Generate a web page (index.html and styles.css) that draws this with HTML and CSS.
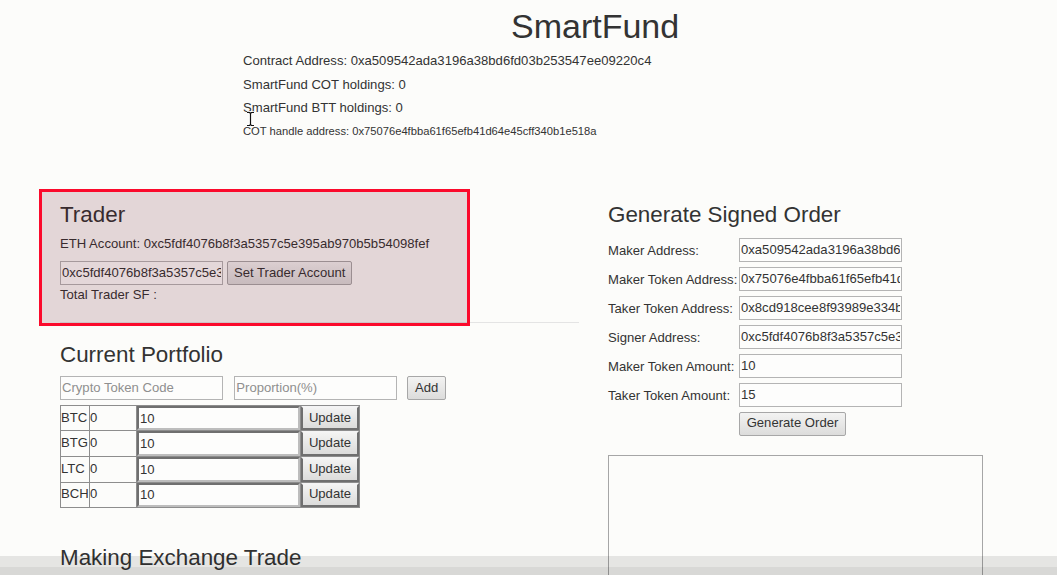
FILE: index.html
```html
<!DOCTYPE html>
<html lang="en">
<head>
<meta charset="utf-8">
<title>SmartFund</title>
<link rel="stylesheet" href="styles.css">
</head>
<body>
<header class="top">
  <h1 class="title">SmartFund</h1>
  <div class="info">
    <p class="info-line">Contract Address: 0xa509542ada3196a38bd6fd03b253547ee09220c4</p>
    <p class="info-line">SmartFund COT holdings: 0</p>
    <p class="info-line">SmartFund BTT holdings: 0</p>
    <p class="info-line info-small">COT handle address: 0x75076e4fbba61f65efb41d64e45cff340b1e518a</p>
  </div>
</header>

<main class="cols">
  <section class="col-left">
    <div class="trader">
      <h3 class="heading heading-trader">Trader</h3>
      <p class="eth">ETH Account: 0xc5fdf4076b8f3a5357c5e395ab970b5b54098fef</p>
      <div class="set-row">
        <input class="field" type="text" value="0xc5fdf4076b8f3a5357c5e395ab970b5b54098fef">
        <button class="btn">Set Trader Account</button>
      </div>
      <p class="total">Total Trader SF :</p>
    </div>
    <hr class="rule">
    <h3 class="heading heading-portfolio">Current Portfolio</h3>
    <div class="add-row">
      <input class="field" type="text" placeholder="Crypto Token Code">
      <input class="field field-prop" type="text" placeholder="Proportion(%)">
      <button class="btn btn-add">Add</button>
    </div>
    <table class="tokens">
      <tr><td class="c-code">BTC</td><td class="c-val">0</td><td class="c-in"><input class="cell-input" type="text" value="10"></td><td class="c-btn"><button class="btn cell-btn">Update</button></td></tr>
      <tr><td class="c-code">BTG</td><td class="c-val">0</td><td class="c-in"><input class="cell-input" type="text" value="10"></td><td class="c-btn"><button class="btn cell-btn">Update</button></td></tr>
      <tr><td class="c-code">LTC</td><td class="c-val">0</td><td class="c-in"><input class="cell-input" type="text" value="10"></td><td class="c-btn"><button class="btn cell-btn">Update</button></td></tr>
      <tr><td class="c-code">BCH</td><td class="c-val">0</td><td class="c-in"><input class="cell-input" type="text" value="10"></td><td class="c-btn"><button class="btn cell-btn">Update</button></td></tr>
    </table>
    <h3 class="heading heading-making">Making Exchange Trade</h3>
  </section>

  <section class="col-right">
    <h3 class="heading heading-order">Generate Signed Order</h3>
    <div class="order-grid">
      <label class="order-label">Maker Address:</label>
      <input class="field" type="text" value="0xa509542ada3196a38bd6fd03b253547ee09220c4">
      <label class="order-label">Maker Token Address:</label>
      <input class="field" type="text" value="0x75076e4fbba61f65efb41d64e45cff340b1e518a">
      <label class="order-label">Taker Token Address:</label>
      <input class="field" type="text" value="0x8cd918cee8f93989e334b1d64e45cff340b1e518">
      <label class="order-label">Signer Address:</label>
      <input class="field" type="text" value="0xc5fdf4076b8f3a5357c5e395ab970b5b54098fef">
      <label class="order-label">Maker Token Amount:</label>
      <input class="field" type="text" value="10">
      <label class="order-label">Taker Token Amount:</label>
      <input class="field" type="text" value="15">
    </div>
    <button class="btn btn-generate">Generate Order</button>
    <textarea class="output"></textarea>
  </section>
</main>

<div class="annotation"></div>
<svg class="ibeam" width="9" height="16" viewBox="0 0 9 16" aria-hidden="true">
  <path d="M1 1.5h2.5l1 1 1-1H8M1 14.5h2.5l1-1 1 1H8M4.5 2.5v11" fill="none" stroke="#fff" stroke-width="2.6"/>
  <path d="M1 1.5h2.5l1 1 1-1H8M1 14.5h2.5l1-1 1 1H8M4.5 2.5v11" fill="none" stroke="#111" stroke-width="1.2"/>
</svg>
<div class="hscroll"><div class="hscroll-track"></div><div class="hscroll-thumb"></div></div>
</body>
</html>
```

FILE: styles.css
```css
html {
  background: #fcfcfa;
}
body {
  margin: 0;
  font-family: "Liberation Sans", Arial, sans-serif;
  font-size: 13.1px;
  line-height: 18.7px;
  color: #333;
  width: 1057px;
  height: 575px;
  overflow: hidden;
}

.title {
  margin: 8px 0 4px 511px;
  font-size: 34px;
  line-height: 37.4px;
  font-weight: normal;
  color: #333;
}
.info {
  padding-left: 243px;
}
.info-line {
  margin: 0;
  line-height: 23.5px;
  white-space: nowrap;
}
.info-small {
  font-size: 11.2px;
  line-height: 22.5px;
}

.cols {
  display: flex;
  gap: 29px;
  padding: 61px 0 0 60px;
}
.col-left {
  width: 519px;
  flex: none;
}
.col-right {
  width: 449px;
  flex: none;
}

.heading {
  font-size: 22.4px;
  line-height: 24.6px;
  font-weight: normal;
  margin: 0;
  color: #333;
  white-space: nowrap;
}
.heading-trader { margin-bottom: 7px; }
.heading-portfolio { margin-top: 19.8px; margin-bottom: 8.7px; }
.heading-making { margin-top: 37.7px; }
.heading-order { margin-bottom: 9.5px; }

.eth {
  margin: 0 0 7.5px;
  white-space: nowrap;
}
.total {
  margin: 0;
  padding-top: 1px;
}

.field {
  box-sizing: border-box;
  width: 163px;
  height: 23.5px;
  margin: 0;
  padding: 0 1px;
  border: 1px solid #b4b4b4;
  border-radius: 0;
  background: #fdfdfc;
  font: inherit;
  font-size: 13.1px;
  color: #333;
  outline: none;
}
.field::placeholder {
  color: #8f8f8f;
}

.btn {
  box-sizing: border-box;
  height: 23.5px;
  margin: 0;
  padding: 0 6px;
  border: 1px solid #a7a7a7;
  border-radius: 2px;
  background: linear-gradient(#f3f3f2, #dcdcdb);
  font: inherit;
  font-size: 13.1px;
  color: #333;
  white-space: nowrap;
}

.set-row {
  display: flex;
  gap: 4px;
  height: 23.5px;
}

.rule {
  margin: 17.7px 0 0;
  border: 0;
  border-top: 1px solid #e4e4e4;
  height: 0;
}

.add-row {
  display: flex;
  height: 23.6px;
  margin-bottom: 5px;
}
.field-prop {
  margin-left: 11.3px;
}
.btn-add {
  margin-left: 10px;
  width: 38.7px;
  padding: 0;
}

.tokens {
  border-collapse: collapse;
  border: 1px solid #3d3d3d;
}
.tokens td {
  border: 1px solid #8d8d8d;
  padding: 0;
  height: 24.6px;
  line-height: 18.7px;
  white-space: nowrap;
}
.c-code { width: 28px; padding-top: 1px; }
.c-val { width: 46px; }
.c-in { width: 163px; }
.c-btn { width: 58px; }
.cell-input {
  box-sizing: border-box;
  display: block;
  width: 100%;
  height: 24.6px;
  margin: 0;
  padding: 0 1px;
  border: 2px solid;
  border-color: #6f6f6f #bdbdbd #bdbdbd #6f6f6f;
  background: #fdfdfc;
  font: inherit;
  font-size: 13.1px;
  color: #333;
  outline: none;
}
.cell-btn {
  display: block;
  width: 100%;
  height: 24.6px;
  border-radius: 0;
  border-width: 2px;
  border-color: #f4f4f4 #6f6f6f #6f6f6f #6f6f6f;
  padding: 0;
}

.order-grid {
  display: grid;
  grid-template-columns: 131px 163px;
  grid-auto-rows: 24px;
  row-gap: 5px;
}
.order-label {
  align-self: center;
  padding-top: 4px;
  white-space: nowrap;
}
.order-grid .field {
  height: 24px;
}
.btn-generate {
  display: block;
  margin: 5px 0 0 131px;
  height: 24px;
  width: 107px;
  padding: 0;
}
.output {
  display: block;
  box-sizing: border-box;
  margin-top: 19px;
  width: 375px;
  height: 160px;
  border: 1px solid #a6a6a6;
  background: #fcfcfa;
  resize: none;
}

.annotation {
  position: absolute;
  left: 39px;
  top: 189px;
  width: 431px;
  height: 137px;
  box-sizing: border-box;
  border: 3px solid #fb0a2c;
  background: rgba(85, 0, 23, 0.15);
  pointer-events: none;
}

.ibeam {
  position: absolute;
  left: 246px;
  top: 111px;
}

.hscroll {
  position: fixed;
  left: 0;
  right: 0;
  bottom: 0;
  height: 19.3px;
  display: flex;
  flex-direction: column;
  pointer-events: none;
}
.hscroll-track {
  height: 11px;
  background: rgba(0, 0, 0, 0.09);
}
.hscroll-thumb {
  flex: 1;
  background: rgba(0, 0, 0, 0.14);
}
```
